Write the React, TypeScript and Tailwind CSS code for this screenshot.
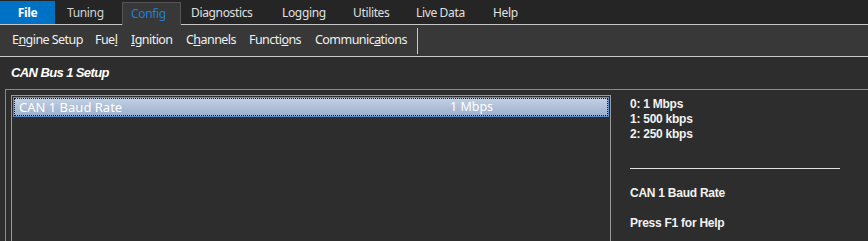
import React from "react";

export default function App() {
  const menuFont = "font-['Noto_Sans',sans-serif]";
  return (
    <div className={`w-[868px] h-[241px] bg-[#2d2d2d] overflow-hidden ${menuFont}`}>
      {/* top menu bar */}
      <div className="h-[25px] bg-[#252525] border-b border-[#c8c8c8] flex items-end text-[12px] tracking-[-0.35px] leading-none">
        <div className="w-[55px] h-[23px] bg-[#0072c6] text-white font-bold flex items-center justify-center">File</div>
        <div className="w-[67px] h-[23px] pl-[12px] flex items-center text-[#d4d4d4]">Tuning</div>
        <div className="w-[59px] h-[23px] translate-y-px bg-[#383838] border-t border-x border-[#555555] pl-[8px] flex items-center text-[#1e7fd8]">Config</div>
        <div className="w-[91px] h-[23px] pl-[10px] flex items-center text-[#e0e0e0]">Diagnostics</div>
        <div className="w-[71px] h-[23px] pl-[10px] flex items-center text-[#e0e0e0]">Logging</div>
        <div className="w-[63px] h-[23px] pl-[10px] flex items-center text-[#e0e0e0]">Utilites</div>
        <div className="w-[77px] h-[23px] pl-[10px] flex items-center text-[#e0e0e0]">Live Data</div>
        <div className="h-[23px] pl-[10px] flex items-center text-[#e0e0e0]">Help</div>
      </div>
      {/* toolbar */}
      <div className="h-[32px] bg-[#383838] border-b border-[#c8c8c8] flex items-center pl-[12px] text-[12.5px] tracking-[-0.55px] text-[#f0f0f0] leading-none">
        <div className="w-[83px]">E<u>n</u>gine Setup</div>
        <div className="w-[36px]">Fue<u>l</u></div>
        <div className="w-[55px]"><u>I</u>gnition</div>
        <div className="w-[63px]">C<u>h</u>annels</div>
        <div className="w-[66px]">Functi<u>o</u>ns</div>
        <div className="w-[102px]">Communic<u>a</u>tions</div>
        <div className="w-px h-[26px] bg-[#c8c8c8]" />
      </div>
      {/* title */}
      <div className="h-[32px] pl-[11px] pt-[8px] font-['Liberation_Sans',sans-serif] font-bold italic text-[13px] tracking-[-0.6px] text-white leading-[16px]">
        CAN Bus 1 Setup
      </div>
      {/* panel */}
      <div className="ml-[5px] h-[200px] border-t border-l border-[#8a8a8a] pl-[5px] pt-[5px] flex">
        <div className="w-[600px] h-[200px] border-t border-x border-[#9a9a9a] p-px">
          <div className="h-[20px] border border-[#5b8fd3] bg-gradient-to-b from-[#c3d0e2] to-[#9cb0cc]">
            <div className="h-full border border-dotted border-[#1a1a1a] flex items-center text-[13px] text-white leading-none">
              <div className="w-[435px] pl-[4px]">CAN 1 Baud Rate</div>
              <div className="text-[12.5px]">1 Mbps</div>
            </div>
          </div>
        </div>
        <div className="ml-[19px] pt-[2px] font-['Liberation_Sans',sans-serif] font-bold text-[12px] tracking-[-0.25px] text-[#f2f2f2] leading-[15px]">
          <div>0: 1 Mbps</div>
          <div>1: 500 kbps</div>
          <div>2: 250 kbps</div>
          <div className="w-[210px] h-px bg-[#e0e0e0] mt-[26px]" />
          <div className="mt-[17px]">CAN 1 Baud Rate</div>
          <div className="mt-[15px]">Press F1 for Help</div>
        </div>
      </div>
    </div>
  );
}
